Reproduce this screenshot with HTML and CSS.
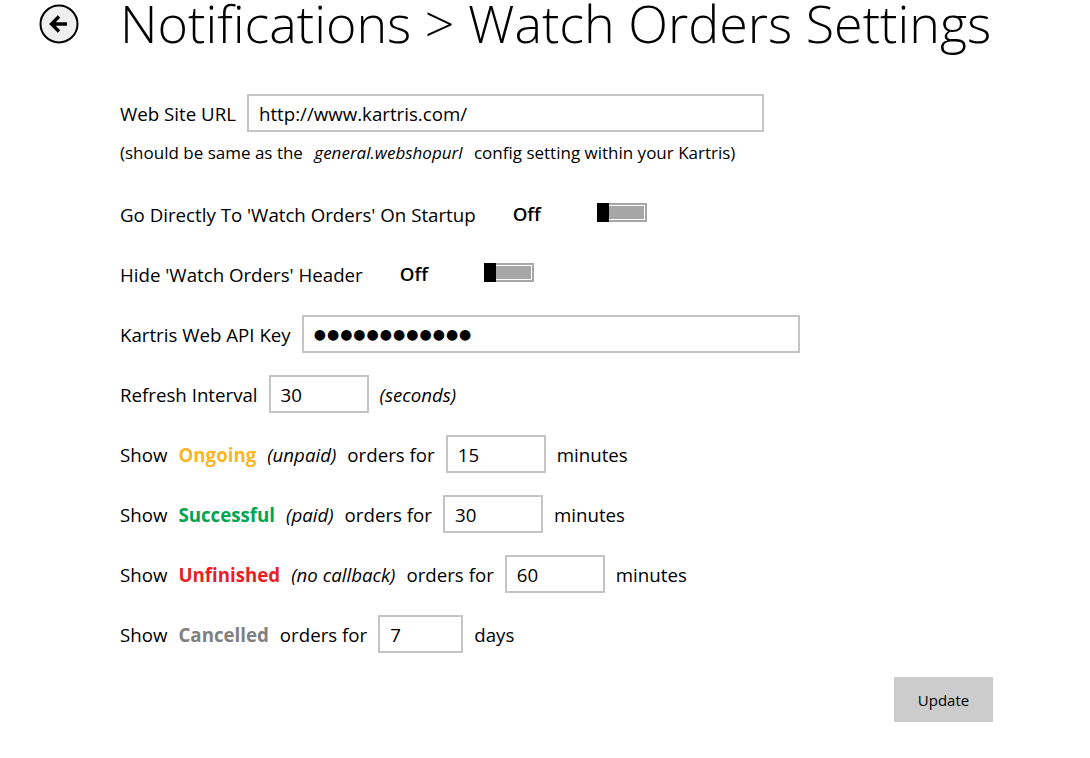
FILE: index.html
```html
<!DOCTYPE html>
<html lang="en">
  <head>
    <meta charset="UTF-8" />
    <title>Watch Orders Settings</title>
    <link rel="stylesheet" href="styles.css">
  </head>
  <body>
    <!-- header -->
    <div class="header">
      <div class="back-btn">
        <svg width="40" height="40" viewBox="0 0 40 40">
          <circle cx="20" cy="20" r="18.5" fill="#efefef" stroke="#000" stroke-width="2" />
          <path d="M28 20 H13 M20 12.5 L12.5 20 L20 27.5" fill="none" stroke="#000" stroke-width="3.4" stroke-linecap="butt" stroke-linejoin="miter" />
        </svg>
      </div>
      <h1>Notifications &gt; Watch Orders Settings</h1>
    </div>

    <div class="settings">
      <div class="row url-row">
        <span class="label">Web Site URL</span>
        <input type="text" class="field url" value="http://www.kartris.com/" />
      </div>
      <div class="hint">(should be same as the <i>general.webshopurl</i> config setting within your Kartris)</div>

      <div class="row">
        <span class="label">Go Directly To 'Watch Orders' On Startup</span>
        <span class="state">Off</span>
        <span class="toggle"><span class="thumb"></span></span>
      </div>

      <div class="row">
        <span class="label">Hide 'Watch Orders' Header</span>
        <span class="state">Off</span>
        <span class="toggle"><span class="thumb"></span></span>
      </div>

      <div class="row">
        <span class="label">Kartris Web API Key</span>
        <input type="text" class="field key" value="●●●●●●●●●●●●" />
      </div>

      <div class="row">
        <span class="label">Refresh Interval</span>
        <input type="text" class="field num" value="30" />
        <span class="word"><i>(seconds)</i></span>
      </div>

      <div class="row">
        <span class="word">Show</span>
        <span class="word status ongoing">Ongoing</span>
        <span class="word"><i>(unpaid)</i></span>
        <span class="label">orders for</span>
        <input type="text" class="field num" value="15" />
        <span class="word">minutes</span>
      </div>

      <div class="row">
        <span class="word">Show</span>
        <span class="word status success">Successful</span>
        <span class="word"><i>(paid)</i></span>
        <span class="label">orders for</span>
        <input type="text" class="field num" value="30" />
        <span class="word">minutes</span>
      </div>

      <div class="row">
        <span class="word">Show</span>
        <span class="word status unfinished">Unfinished</span>
        <span class="word"><i>(no callback)</i></span>
        <span class="label">orders for</span>
        <input type="text" class="field num" value="60" />
        <span class="word">minutes</span>
      </div>

      <div class="row">
        <span class="word">Show</span>
        <span class="word status cancelled">Cancelled</span>
        <span class="label">orders for</span>
        <input type="text" class="field small" value="7" />
        <span class="word">days</span>
      </div>

      <div class="actions">
        <button class="update">Update</button>
      </div>
    </div>
  </body>
</html>
```

FILE: styles.css
```css
body {
  margin: 0;
  background-color: #fff;
  color: #000;
  font-family: "Open Sans", "Noto Sans", sans-serif;
  font-size: 18.7px;
}

.header {
  display: flex;
  align-items: center;
  height: 46px;
}

.back-btn {
  width: 40px;
  height: 40px;
  margin-left: 39px;
  margin-top: 2px;
}

h1 {
  margin: 0 0 0 41px;
  font-family: "Open Sans", "Noto Sans", sans-serif;
  font-weight: 300;
  font-size: 52px;
  line-height: 46px;
  white-space: nowrap;
}

.settings {
  width: 873px;
  padding-left: 120px;
  padding-top: 47px;
}

.row {
  display: flex;
  align-items: center;
  height: 60px;
}

.url-row {
  height: 40px;
}

.hint {
  font-size: 17px;
  height: 40px;
  line-height: 40px;
  margin-bottom: 11px;
}

.hint i {
  margin: 0 7px;
}

.label,
.word {
  margin-right: 11px;
  white-space: nowrap;
}

.state {
  font-weight: 600;
  margin-left: 26px;
  margin-right: 56px;
  margin-top: -2px;
}

.status {
  font-weight: 700;
}

.ongoing {
  color: #f8b825;
}

.success {
  color: #00a550;
}

.unfinished {
  color: #ec1c24;
}

.cancelled {
  color: #808080;
}

.field {
  height: 38px;
  box-sizing: border-box;
  border: 2px solid #c4c4c4;
  padding: 0 10px;
  font-family: inherit;
  font-size: 18.7px;
  color: #000;
  margin-right: 11px;
  outline: none;
}

.url {
  width: 517px;
}

.key {
  width: 498px;
  font-family: "DejaVu Sans", sans-serif;
  font-size: 14px;
  letter-spacing: 1px;
}

.num {
  width: 100px;
}

.small {
  width: 85px;
}

.toggle {
  display: flex;
  width: 50px;
  height: 19px;
  box-sizing: border-box;
  border: 2px solid #a6a6a6;
  padding: 1px;
  background-color: #a6a6a6;
  background-clip: content-box;
  box-shadow: inset 0 0 0 1px #fff;
  position: relative;
  margin-top: -4px;
}

.thumb {
  position: absolute;
  left: -2px;
  top: -2px;
  width: 12px;
  height: 19px;
  background-color: #000;
}

.actions {
  display: flex;
  justify-content: flex-end;
  margin-top: 13px;
}

.update {
  width: 99px;
  height: 45px;
  border: none;
  background-color: #cccccc;
  font-family: inherit;
  font-size: 15px;
  color: #000;
}
```
